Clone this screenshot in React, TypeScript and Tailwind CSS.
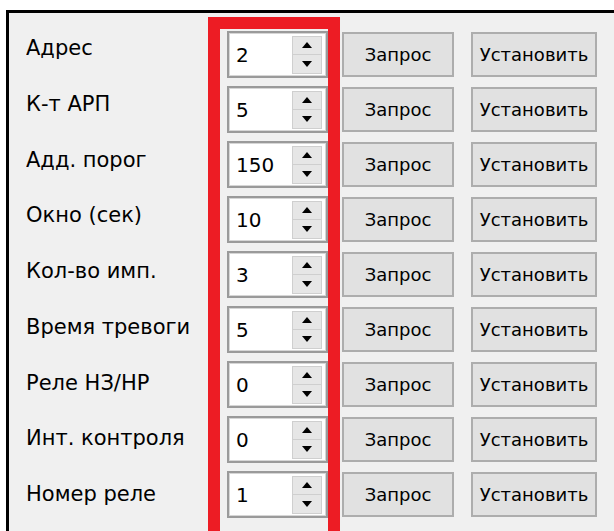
import React from "react";

interface Param {
  label: string;
  value: string;
}

const params: Param[] = [
  { label: "Адрес", value: "2" },
  { label: "К-т АРП", value: "5" },
  { label: "Адд. порог", value: "150" },
  { label: "Окно (сек)", value: "10" },
  { label: "Кол-во имп.", value: "3" },
  { label: "Время тревоги", value: "5" },
  { label: "Реле НЗ/НР", value: "0" },
  { label: "Инт. контроля", value: "0" },
  { label: "Номер реле", value: "1" },
];

const font = { fontFamily: '"DejaVu Sans", Tahoma, sans-serif' };

function Arrow({ up }: { up?: boolean }) {
  return (
    <svg width="10" height="6" viewBox="0 0 10 6">
      {up ? <path d="M5 0 L10 6 L0 6 Z" fill="#000" /> : <path d="M0 0 L10 0 L5 6 Z" fill="#000" />}
    </svg>
  );
}

function SpinBox({ value }: { value: string }) {
  return (
    <div className="flex items-center w-[101px] h-[47px] bg-white border-2 border-[#9a9a9a] shadow-[inset_0_0_0_1px_#d6d6d6] pr-[4px]">
      <span className="flex-1 pl-[7px] text-[20px] leading-none text-black" style={font}>
        {value}
      </span>
      <div className="flex flex-col w-[30px] h-[38px]">
        <button className="flex-1 flex items-center justify-center bg-[#e6e6e6] border border-[#cfcfcf]">
          <Arrow up />
        </button>
        <button className="flex-1 flex items-center justify-center bg-[#e6e6e6] border border-[#cfcfcf] border-t-0">
          <Arrow />
        </button>
      </div>
    </div>
  );
}

function PushButton({ text, width }: { text: string; width: string }) {
  return (
    <button
      className={`${width} h-[45px] bg-[#e1e1e1] border-2 border-[#adadad] text-[18px] text-black flex items-center justify-center`}
      style={font}
    >
      {text}
    </button>
  );
}

export default function App() {
  return (
    <div className="relative w-[614px] h-[531px] overflow-hidden bg-white pl-[6px] pt-[10px]">
      <div className="flex w-[620px] h-[540px] bg-[#f0f0f0] border-l-[3px] border-t-[3px] border-black">
        {/* labels */}
        <div className="flex flex-col gap-[31.75px] pt-[23px] ml-[17px] w-[164px] mr-[37px]">
          {params.map((p) => (
            <div
              key={p.label}
              className="h-[24px] leading-[24px] text-[21px] text-black whitespace-nowrap overflow-hidden"
              style={font}
            >
              {p.label}
            </div>
          ))}
        </div>

        {/* spin boxes and buttons */}
        <div className="flex flex-col gap-[8px] pt-[18px]">
          {params.map((p) => (
            <div key={p.label} className="flex items-center h-[47px]">
              <SpinBox value={p.value} />
              <div className="ml-[14px]">
                <PushButton text="Запрос" width="w-[112px]" />
              </div>
              <div className="ml-[17px]">
                <PushButton text="Установить" width="w-[126px]" />
              </div>
            </div>
          ))}
        </div>
      </div>

      {/* highlight frame */}
      <div className="absolute left-[208px] top-[17px] w-[132px] h-[530px] border-[12px] border-[#ed1c24] pointer-events-none" />
    </div>
  );
}
